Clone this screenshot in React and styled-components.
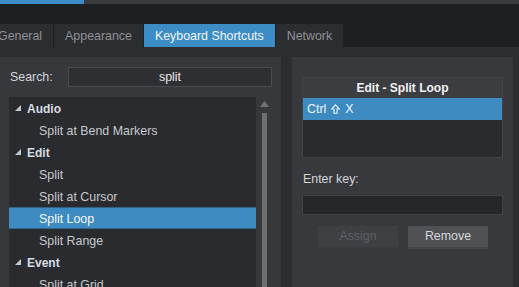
import React from "react";
import styled, { createGlobalStyle } from "styled-components";

const GlobalStyle = createGlobalStyle`
  html, body {
    margin: 0;
    padding: 0;
    background: #2c2d30;
    overflow: hidden;
  }
  body {
    font-family: "Liberation Sans", Arial, sans-serif;
    font-size: 12.4px;
  }
`;

const Page = styled.div`
  width: 519px;
  height: 287px;
  display: flex;
  flex-direction: column;
  overflow: hidden;
  background: #2c2d30;
`;

const TopStrip = styled.div`
  height: 4px;
  background: #3a3b3f;
  display: flex;
`;

const TopStripActive = styled.div`
  width: 84px;
  background: #3c8dc5;
`;

const DarkBand = styled.div`
  height: 20px;
  background: #1e1f21;
`;

const TabBar = styled.div`
  height: 23px;
  background: #1e1f21;
  display: flex;
  gap: 1px;
  margin-left: -13px;
`;

const Tab = styled.div`
  padding: 1px 11px 0 11px;
  line-height: 22px;
  background: ${(p) => (p.$active ? "#3c8dc5" : "#2c2d30")};
  color: ${(p) => (p.$active ? "#f2f4f6" : "#8e9196")};
  white-space: nowrap;
`;

const Content = styled.div`
  flex: 1;
  display: flex;
  gap: 11px;
  padding-top: 10px;
  min-height: 0;
`;

const LeftPanel = styled.div`
  width: 281px;
  background: #37383c;
  padding: 10px 9px 0 9px;
  box-sizing: border-box;
  display: flex;
  flex-direction: column;
  gap: 10px;
  min-height: 0;
`;

const SearchRow = styled.div`
  display: flex;
  align-items: center;
  height: 20px;
`;

const Label = styled.div`
  color: #d2d6db;
  width: 58px;
  padding-left: 1px;
  line-height: 15px;
`;

const TextBox = styled.div`
  flex: 1;
  height: ${(p) => p.$h || 20}px;
  box-sizing: border-box;
  border: 1px solid ${(p) => p.$border || "#4a4b4f"};
  background: ${(p) => p.$bg || "#2e2f32"};
  color: #e6e8ea;
  text-align: center;
  line-height: ${(p) => (p.$h || 20) - 2}px;
`;

const ListArea = styled.div`
  flex: 1;
  display: flex;
  min-height: 0;
`;

const List = styled.div`
  width: 247px;
  background: #2a2b2e;
  overflow: hidden;
`;

const Row = styled.div`
  height: 22px;
  box-sizing: border-box;
  display: flex;
  align-items: center;
  padding-left: ${(p) => (p.$child ? 30 : 6)}px;
  padding-top: 1px;
  gap: 6px;
  white-space: nowrap;
  color: ${(p) => (p.$selected ? "#f4f6f8" : p.$category ? "#d6dce3" : "#c6c9cd")};
  font-weight: ${(p) => (p.$category ? "bold" : "normal")};
  font-size: ${(p) => (p.$category ? "12px" : "12.4px")};
  background: ${(p) => (p.$selected ? "#3d8bc1" : "transparent")};
  border-top: 1px solid ${(p) => (p.$selected ? "#2f6488" : "transparent")};
  border-bottom: 1px solid ${(p) => (p.$selected ? "#2f6488" : "transparent")};
`;

const Scrollbar = styled.div`
  width: 16px;
  display: flex;
  flex-direction: column;
  align-items: center;
  padding-top: 4px;
  gap: 3px;
`;

const Thumb = styled.div`
  width: 5px;
  flex: 1;
  background: #6e6f71;
  margin-top: 3px;
`;

const RightPanel = styled.div`
  width: 221px;
  background: #38393d;
  padding: 20px 10px 0 10px;
  box-sizing: border-box;
  display: flex;
  flex-direction: column;
`;

const KeyBox = styled.div`
  border: 1px solid #434448;
  display: flex;
  flex-direction: column;
  height: 81px;
  box-sizing: border-box;
`;

const KeyHeader = styled.div`
  height: 20px;
  background: #3c3d41;
  color: #f2f3f5;
  font-weight: bold;
  font-size: 12px;
  text-align: center;
  line-height: 20px;
`;

const KeyRow = styled.div`
  height: 22px;
  background: #3d8bc1;
  color: #f2f4f6;
  display: flex;
  align-items: center;
  gap: 5px;
  padding-left: 4px;
`;

const KeyEmpty = styled.div`
  flex: 1;
  background: #2a2b2e;
`;

const FieldLabel = styled.div`
  margin-top: 14px;
  color: #d2d6db;
  line-height: 15px;
  padding-left: 1px;
`;

const FieldRow = styled.div`
  display: flex;
  margin-top: 8px;
`;

const Buttons = styled.div`
  display: flex;
  justify-content: center;
  gap: 10px;
  margin-top: 11px;
  padding-left: 1px;
`;

const Button = styled.div`
  width: 80px;
  height: 23px;
  box-sizing: border-box;
  text-align: center;
  line-height: 21px;
  background: ${(p) => (p.$disabled ? "#3f4044" : "#4f5155")};
  color: ${(p) => (p.$disabled ? "#5e6064" : "#d6d8db")};
  border-bottom: 2px solid ${(p) => (p.$disabled ? "#3a3b3f" : "#45474b")};
`;

const Triangle = () => (
  <svg width="6" height="6" viewBox="0 0 6 6" style={{ flex: "none", marginBottom: 1 }}>
    <polygon points="6,0 6,6 0,6" fill="#c4c7cb" />
  </svg>
);

const UpArrow = () => (
  <svg width="9" height="6" viewBox="0 0 9 6">
    <polygon points="4.5,0 9,6 0,6" fill="#707174" />
  </svg>
);

const ShiftIcon = () => (
  <svg width="9" height="10" viewBox="0 0 9 10" style={{ flex: "none" }}>
    <polygon
      points="4.5,0.8 8.2,5 6,5 6,9.2 3,9.2 3,5 0.8,5"
      fill="none"
      stroke="#f2f4f6"
      strokeWidth="1.1"
      strokeLinejoin="miter"
    />
  </svg>
);

const items = [
  { label: "Audio", category: true },
  { label: "Split at Bend Markers" },
  { label: "Edit", category: true },
  { label: "Split" },
  { label: "Split at Cursor" },
  { label: "Split Loop", selected: true },
  { label: "Split Range" },
  { label: "Event", category: true },
  { label: "Split at Grid" },
];

export default function App() {
  return (
    <Page>
      <GlobalStyle />
      <TopStrip>
        <TopStripActive />
      </TopStrip>
      <DarkBand />
      <TabBar>
        <Tab>General</Tab>
        <Tab>Appearance</Tab>
        <Tab $active>Keyboard Shortcuts</Tab>
        <Tab>Network</Tab>
      </TabBar>
      <Content>
        <LeftPanel>
          <SearchRow>
            <Label>Search:</Label>
            <TextBox>split</TextBox>
          </SearchRow>
          <ListArea>
            <List>
              {items.map((it) => (
                <Row
                  key={it.label}
                  $category={it.category}
                  $child={!it.category}
                  $selected={it.selected}
                >
                  {it.category && <Triangle />}
                  {it.label}
                </Row>
              ))}
            </List>
            <Scrollbar>
              <UpArrow />
              <Thumb />
            </Scrollbar>
          </ListArea>
        </LeftPanel>
        <RightPanel>
          <KeyBox>
            <KeyHeader>Edit - Split Loop</KeyHeader>
            <KeyRow>
              <span>Ctrl</span>
              <ShiftIcon />
              <span>X</span>
            </KeyRow>
            <KeyEmpty />
          </KeyBox>
          <FieldLabel>Enter key:</FieldLabel>
          <FieldRow>
            <TextBox $h={20} $bg="#262729" $border="#414246" />
          </FieldRow>
          <Buttons>
            <Button $disabled>Assign</Button>
            <Button>Remove</Button>
          </Buttons>
        </RightPanel>
      </Content>
    </Page>
  );
}
